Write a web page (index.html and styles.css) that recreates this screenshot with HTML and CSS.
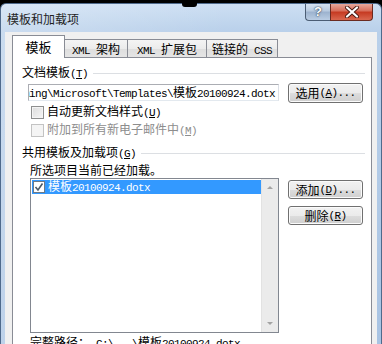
FILE: index.html
```html
<!DOCTYPE html>
<html lang="zh-CN">
<head>
<meta charset="utf-8">
<title>模板和加载项</title>
<link rel="stylesheet" href="styles.css">
</head>
<body>
<div class="screen">
  <div class="notch"></div>
  <div class="window">
    <div class="titlebar">
      <span class="title">模板和加载项</span>
      <div class="caption-btns">
        <div class="cbtn help">?</div>
        <div class="cbtn close">
          <svg width="16" height="12" viewBox="0 0 16 12"><path d="M3 1.5 L13 10.5 M13 1.5 L3 10.5" stroke="#4a1a12" stroke-width="4" stroke-linecap="round"/><path d="M3 1.5 L13 10.5 M13 1.5 L3 10.5" stroke="#ffffff" stroke-width="2.2" stroke-linecap="round"/></svg>
        </div>
      </div>
    </div>
    <div class="client">
      <div class="tabs">
        <div class="tab active">模板</div>
        <div class="tab"><span class="m">XML&nbsp;</span>架构</div>
        <div class="tab"><span class="m">XML&nbsp;</span>扩展包</div>
        <div class="tab">链接的<span class="m">&nbsp;CSS</span></div>
      </div>
      <div class="panel">
        <div class="group-label"><span>文档模板<span class="m">(<u>T</u>)</span></span><i class="rule"></i></div>
        <div class="tpl-row">
          <div class="textbox"><span class="tb-text"><span class="m">C:\Users\Admin\AppData\Roaming\Microsoft\Templates\</span>模板<span class="m">20100924.dotx</span></span></div>
          <div class="btn">选用<span class="m">(<u>A</u>)...</span></div>
        </div>
        <div class="check-row"><span class="cb"></span><span>自动更新文档样式<span class="m">(<u>U</u>)</span></span></div>
        <div class="check-row disabled"><span class="cb"></span><span>附加到所有新电子邮件中<span class="m">(<u>M</u>)</span></span></div>
        <div class="group-label second"><span>共用模板及加载项<span class="m">(<u>G</u>)</span></span><i class="rule"></i></div>
        <div class="hint">所选项目当前已经加载。</div>
        <div class="list-row">
          <div class="listbox">
            <div class="items">
              <div class="item sel"><span class="cb small checked"><svg width="10" height="10" viewBox="0 0 10 10"><path d="M1.5 5 L4 8 L8.5 1.5" fill="none" stroke="#4d5a66" stroke-width="1.6"/></svg></span><span>模板<span class="m">20100924.dotx</span></span></div>
            </div>
            <div class="scrollbar">
              <span class="sbtn"><i class="arr up"></i></span>
              <span class="sbtn"><i class="arr down"></i></span>
            </div>
          </div>
          <div class="side-btns">
            <div class="btn">添加<span class="m">(<u>D</u>)...</span></div>
            <div class="btn">删除<span class="m">(<u>R</u>)</span></div>
          </div>
        </div>
        <div class="fullpath">完整路径：<span class="m">&nbsp;C:\...\</span>模板<span class="m">20100924.dotx</span></div>
      </div>
    </div>
  </div>
</div>
</body>
</html>
```
FILE: styles.css
```css
* { box-sizing: border-box; margin: 0; padding: 0; }
html, body { width: 382px; height: 344px; overflow: hidden; }
body {
  background: #000;
  font-family: "Noto Sans CJK SC", "Liberation Sans", sans-serif;
  font-size: 12px;
  line-height: 14px;
  color: #000;
}
.m {
  font-family: "Liberation Mono", "Noto Sans CJK SC", monospace;
  font-size: 11px;
  letter-spacing: -0.6px;
}
.screen { position: relative; height: 344px; padding-top: 3px; overflow: hidden; }
.notch {
  position: absolute; left: 182px; top: 0; width: 15px; height: 7px;
  background: #000; border-radius: 0 0 3px 3px; z-index: 5;
}
.window {
  height: 341px;
  overflow: hidden;
  border: 1px solid #4f6a8c;
  border-bottom: none;
  border-radius: 6px 6px 0 0;
  background:
    linear-gradient(to right, rgba(255,255,255,0.25) 0, rgba(255,255,255,0) 60%),
    linear-gradient(to bottom, #cddff3 0, #b9d0ea 28px, #a8c3e3 100%);
  padding: 0 4px;
  display: flex;
  flex-direction: column;
}
.titlebar {
  height: 28px;
  flex: none;
  display: flex;
  align-items: flex-start;
  justify-content: space-between;
}
.title { align-self: center; padding-left: 2px; color: #1f1f1f; margin-top: 2px; }
.caption-btns { display: flex; margin-top: -1px; margin-right: 4px; }
.cbtn {
  height: 18px;
  border: 1px solid #4b5d74;
  border-top: none;
  display: flex; align-items: center; justify-content: center;
}
.help {
  width: 25px;
  border-radius: 0 0 0 4px;
  border-right: none;
  background: linear-gradient(to bottom, #dae5f2 0, #b9cbe0 45%, #9db3cf 55%, #bacde3 100%);
  color: #fff;
  font-family: "Liberation Sans", sans-serif;
  font-weight: bold;
  font-size: 13px;
  text-shadow: 0 0 2px #2d3e55, 0 0 1px #2d3e55;
}
.close {
  width: 43px;
  border-color: #6a2a20;
  border-radius: 0 0 4px 0;
  background: linear-gradient(to bottom, #eab0a4 0, #d8705d 45%, #c63b23 55%, #d9674f 100%);
}
.client {
  flex: 1;
  min-height: 0;
  overflow: hidden;
  background: #f0f0f0;
  padding: 3px 5px 0 7px;
  display: flex;
  flex-direction: column;
}
.tabs { display: flex; align-items: flex-end; height: 23px; flex: none; }
.tab {
  height: 19px;
  line-height: 18px;
  text-align: center;
  white-space: nowrap;
  border: 1px solid #898c95;
  border-bottom: none;
  background: linear-gradient(to bottom, #f4f4f4 0, #ebebeb 50%, #dedede 51%, #e6e6e6 100%);
}
.tab:nth-child(2) { width: 63px; border-left: none; }
.tab:nth-child(3) { width: 79px; border-left: none; }
.tab:nth-child(4) { width: 71px; border-left: none; }
.tab.active {
  width: 53px;
  height: 23px;
  line-height: 21px;
  background: #fff;
  position: relative;
  z-index: 2;
  font-size: 13px;
}
.panel {
  flex: 1;
  min-height: 0;
  margin-top: -1px;
  position: relative;
  z-index: 1;
  background: #fff;
  border: 1px solid #898c95;
  border-bottom: none;
  padding: 8px 6px 0 9px;
}
.group-label { display: flex; align-items: center; height: 14px; gap: 5px; }
.group-label .rule { flex: 1; height: 0; border-top: 1px solid #dcdfe3; margin-top: 1px; }
.group-label.second { margin-top: 7px; }
.tpl-row { display: flex; align-items: flex-start; margin-top: 3px; padding-left: 6px; }
.textbox {
  width: 251px; height: 17px; margin-top: 1px;
  border: 1px solid #abadb3;
  border-right-color: #dbdfe6; border-bottom-color: #e3e9ef;
  padding: 0 3px;
  overflow: hidden;
  display: flex; justify-content: flex-end; align-items: center;
  white-space: nowrap;
}
.tb-text { flex: none; }
.btn {
  width: 75px; height: 20px;
  margin-left: 9px;
  border: 1px solid #707070;
  border-radius: 3px;
  background: linear-gradient(to bottom, #f2f2f2 0, #ebebeb 50%, #dddddd 51%, #cfcfcf 100%);
  box-shadow: inset 0 0 0 1px #fbfbfb;
  display: flex; align-items: center; justify-content: center;
  white-space: nowrap;
}
.check-row { height: 18px; display: flex; align-items: center; gap: 3px; padding-left: 9px; }
.cb {
  width: 13px; height: 13px; flex: none;
  border: 1px solid #8e8f8f;
  background: linear-gradient(135deg, #dcdcdc 0, #f6f6f6 100%);
  box-shadow: inset 0 0 0 1px #f4f4f4;
  display: flex; align-items: center; justify-content: center;
}
.check-row.disabled { color: #8d8d8d; }
.check-row.disabled .cb { border-color: #c3c3c3; background: #f4f4f4; }
.hint { margin-top: 3px; padding-left: 8px; height: 14px; }
.list-row { display: flex; align-items: flex-start; margin-top: 1px; padding-left: 8px; }
.listbox {
  width: 249px; height: 155px; flex: none;
  border: 1px solid #828790;
  display: flex;
  background: #fff;
}
.items { flex: 1; padding: 1px 0 0 1px; }
.item { height: 14px; display: flex; align-items: center; gap: 3px; padding-left: 1px; }
.item.sel { background: #3399ff; color: #fff; }
.cb.small { width: 12px; height: 12px; border-color: #6c7a88; background: #fff; box-shadow: none; }
.scrollbar {
  width: 17px;
  background: #ebebeb;
  border-left: 1px solid #e2e2e2;
  display: flex; flex-direction: column; justify-content: space-between;
}
.sbtn { height: 17px; display: flex; align-items: center; justify-content: center; }
.arr { width: 0; height: 0; border-left: 3px solid transparent; border-right: 3px solid transparent; }
.arr.up { border-bottom: 3px solid #a3a3a3; }
.arr.down { border-top: 3px solid #a3a3a3; }
.side-btns { display: flex; flex-direction: column; }
.side-btns .btn { height: 19px; margin-top: 2px; }
.side-btns .btn + .btn { margin-top: 7px; }
.fullpath { margin-top: 2px; padding-left: 8px; white-space: nowrap; height: 14px; }
```
